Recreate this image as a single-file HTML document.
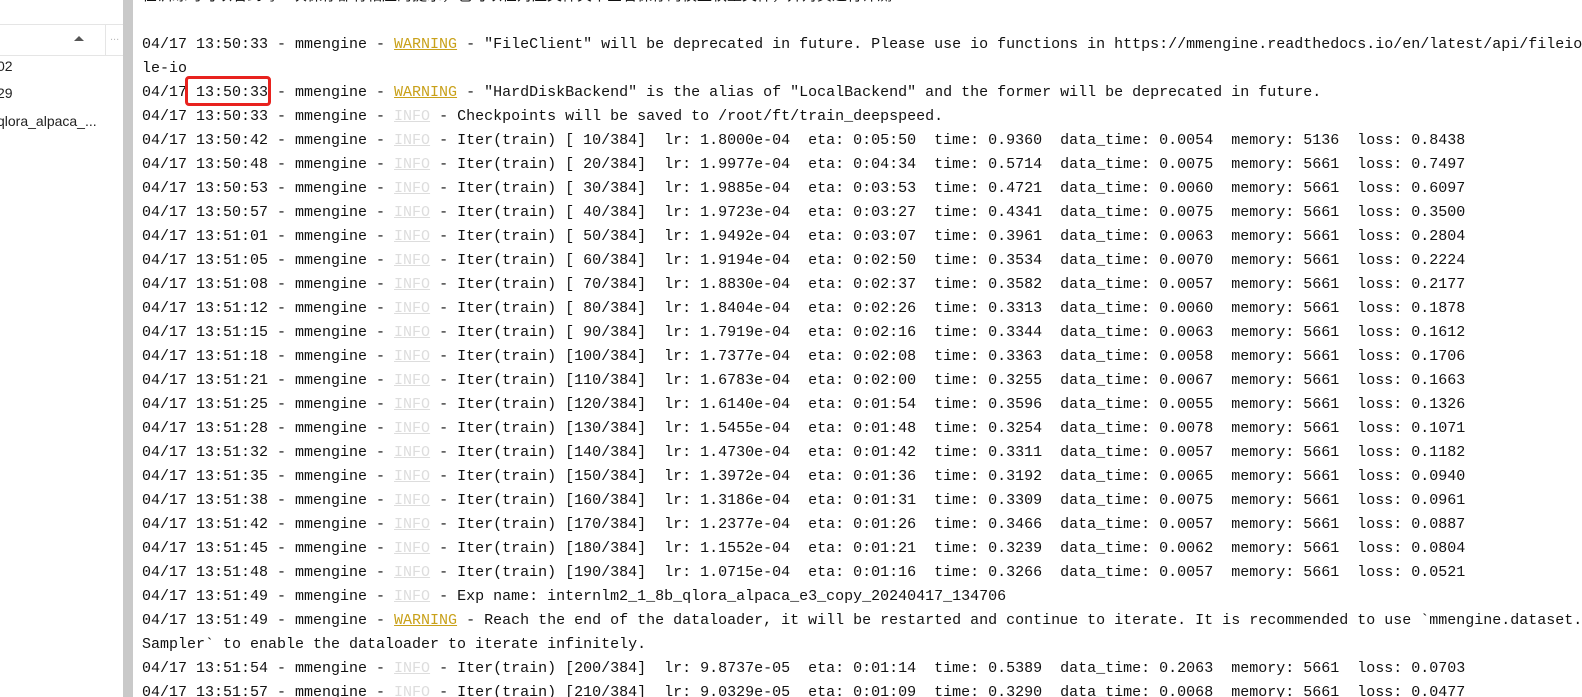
<!DOCTYPE html>
<html><head><meta charset="utf-8"><style>
html,body{margin:0;padding:0;background:#fff;width:1582px;height:697px;overflow:hidden;position:relative}
#side{position:absolute;left:0;top:0;width:123px;height:697px;background:#fff;font-family:"Liberation Sans","Noto Sans CJK SC",sans-serif;font-size:14px;color:#222}
#hdr{position:absolute;left:0;top:24px;width:123px;height:30px;border-top:1px solid #e5e5e5;border-bottom:1px solid #e5e5e5}
#hdr .sep{position:absolute;left:105px;top:0;width:1px;height:30px;background:#e5e5e5}
#hdr .arr{position:absolute;left:74px;top:11px;width:0;height:0;border-left:5px solid transparent;border-right:5px solid transparent;border-bottom:5px solid #555}
#hdr .dots{position:absolute;left:110px;top:6px;color:#bbb;font-size:11px}
.it{position:absolute;left:-3px;white-space:nowrap}
#bar{position:absolute;left:123px;top:0;width:10px;height:697px;background:#c9c9c9}
#wrap{position:absolute;left:142px;top:0;width:1440px;height:697px;overflow:hidden}
pre{position:absolute;left:0;top:-15px;margin:0;font-family:"Liberation Mono","Noto Sans CJK SC",monospace;font-size:15px;line-height:23.98px;color:#111;white-space:pre}
.w{color:#c9a11a;text-decoration:underline}
.i{color:#ddd;text-decoration:underline}
#box{position:absolute;left:185px;top:76px;width:80px;height:24px;border:3px solid #e8221e;border-radius:4px}
</style></head><body>
<div id="side">
<div id="hdr"><div class="arr"></div><div class="sep"></div><div class="dots">...</div></div>
<div class="it" style="top:58px">02</div>
<div class="it" style="top:85px">29</div>
<div class="it" style="top:113px">qlora_alpaca_...</div>
</div>
<div id="bar"></div>
<div id="wrap"><pre>在训练时可以看到每一次保存都有相应的提示，也可以在对应文件夹中查看保存的模型权重文件，并对其进行评测

04/17 13:50:33 - mmengine - <span class="w">WARNING</span> - "FileClient" will be deprecated in future. Please use io functions in https://mmengine.readthedocs.io/en/latest/api/fileio.html#fi
le-io
04/17 13:50:33 - mmengine - <span class="w">WARNING</span> - "HardDiskBackend" is the alias of "LocalBackend" and the former will be deprecated in future.
04/17 13:50:33 - mmengine - <span class="i">INFO</span> - Checkpoints will be saved to /root/ft/train_deepspeed.
04/17 13:50:42 - mmengine - <span class="i">INFO</span> - Iter(train) [ 10/384]  lr: 1.8000e-04  eta: 0:05:50  time: 0.9360  data_time: 0.0054  memory: 5136  loss: 0.8438
04/17 13:50:48 - mmengine - <span class="i">INFO</span> - Iter(train) [ 20/384]  lr: 1.9977e-04  eta: 0:04:34  time: 0.5714  data_time: 0.0075  memory: 5661  loss: 0.7497
04/17 13:50:53 - mmengine - <span class="i">INFO</span> - Iter(train) [ 30/384]  lr: 1.9885e-04  eta: 0:03:53  time: 0.4721  data_time: 0.0060  memory: 5661  loss: 0.6097
04/17 13:50:57 - mmengine - <span class="i">INFO</span> - Iter(train) [ 40/384]  lr: 1.9723e-04  eta: 0:03:27  time: 0.4341  data_time: 0.0075  memory: 5661  loss: 0.3500
04/17 13:51:01 - mmengine - <span class="i">INFO</span> - Iter(train) [ 50/384]  lr: 1.9492e-04  eta: 0:03:07  time: 0.3961  data_time: 0.0063  memory: 5661  loss: 0.2804
04/17 13:51:05 - mmengine - <span class="i">INFO</span> - Iter(train) [ 60/384]  lr: 1.9194e-04  eta: 0:02:50  time: 0.3534  data_time: 0.0070  memory: 5661  loss: 0.2224
04/17 13:51:08 - mmengine - <span class="i">INFO</span> - Iter(train) [ 70/384]  lr: 1.8830e-04  eta: 0:02:37  time: 0.3582  data_time: 0.0057  memory: 5661  loss: 0.2177
04/17 13:51:12 - mmengine - <span class="i">INFO</span> - Iter(train) [ 80/384]  lr: 1.8404e-04  eta: 0:02:26  time: 0.3313  data_time: 0.0060  memory: 5661  loss: 0.1878
04/17 13:51:15 - mmengine - <span class="i">INFO</span> - Iter(train) [ 90/384]  lr: 1.7919e-04  eta: 0:02:16  time: 0.3344  data_time: 0.0063  memory: 5661  loss: 0.1612
04/17 13:51:18 - mmengine - <span class="i">INFO</span> - Iter(train) [100/384]  lr: 1.7377e-04  eta: 0:02:08  time: 0.3363  data_time: 0.0058  memory: 5661  loss: 0.1706
04/17 13:51:21 - mmengine - <span class="i">INFO</span> - Iter(train) [110/384]  lr: 1.6783e-04  eta: 0:02:00  time: 0.3255  data_time: 0.0067  memory: 5661  loss: 0.1663
04/17 13:51:25 - mmengine - <span class="i">INFO</span> - Iter(train) [120/384]  lr: 1.6140e-04  eta: 0:01:54  time: 0.3596  data_time: 0.0055  memory: 5661  loss: 0.1326
04/17 13:51:28 - mmengine - <span class="i">INFO</span> - Iter(train) [130/384]  lr: 1.5455e-04  eta: 0:01:48  time: 0.3254  data_time: 0.0078  memory: 5661  loss: 0.1071
04/17 13:51:32 - mmengine - <span class="i">INFO</span> - Iter(train) [140/384]  lr: 1.4730e-04  eta: 0:01:42  time: 0.3311  data_time: 0.0057  memory: 5661  loss: 0.1182
04/17 13:51:35 - mmengine - <span class="i">INFO</span> - Iter(train) [150/384]  lr: 1.3972e-04  eta: 0:01:36  time: 0.3192  data_time: 0.0065  memory: 5661  loss: 0.0940
04/17 13:51:38 - mmengine - <span class="i">INFO</span> - Iter(train) [160/384]  lr: 1.3186e-04  eta: 0:01:31  time: 0.3309  data_time: 0.0075  memory: 5661  loss: 0.0961
04/17 13:51:42 - mmengine - <span class="i">INFO</span> - Iter(train) [170/384]  lr: 1.2377e-04  eta: 0:01:26  time: 0.3466  data_time: 0.0057  memory: 5661  loss: 0.0887
04/17 13:51:45 - mmengine - <span class="i">INFO</span> - Iter(train) [180/384]  lr: 1.1552e-04  eta: 0:01:21  time: 0.3239  data_time: 0.0062  memory: 5661  loss: 0.0804
04/17 13:51:48 - mmengine - <span class="i">INFO</span> - Iter(train) [190/384]  lr: 1.0715e-04  eta: 0:01:16  time: 0.3266  data_time: 0.0057  memory: 5661  loss: 0.0521
04/17 13:51:49 - mmengine - <span class="i">INFO</span> - Exp name: internlm2_1_8b_qlora_alpaca_e3_copy_20240417_134706
04/17 13:51:49 - mmengine - <span class="w">WARNING</span> - Reach the end of the dataloader, it will be restarted and continue to iterate. It is recommended to use `mmengine.dataset.Infinite
Sampler` to enable the dataloader to iterate infinitely.
04/17 13:51:54 - mmengine - <span class="i">INFO</span> - Iter(train) [200/384]  lr: 9.8737e-05  eta: 0:01:14  time: 0.5389  data_time: 0.2063  memory: 5661  loss: 0.0703
04/17 13:51:57 - mmengine - <span class="i">INFO</span> - Iter(train) [210/384]  lr: 9.0329e-05  eta: 0:01:09  time: 0.3290  data_time: 0.0068  memory: 5661  loss: 0.0477
</pre></div>
<div id="box"></div>
</body></html>
